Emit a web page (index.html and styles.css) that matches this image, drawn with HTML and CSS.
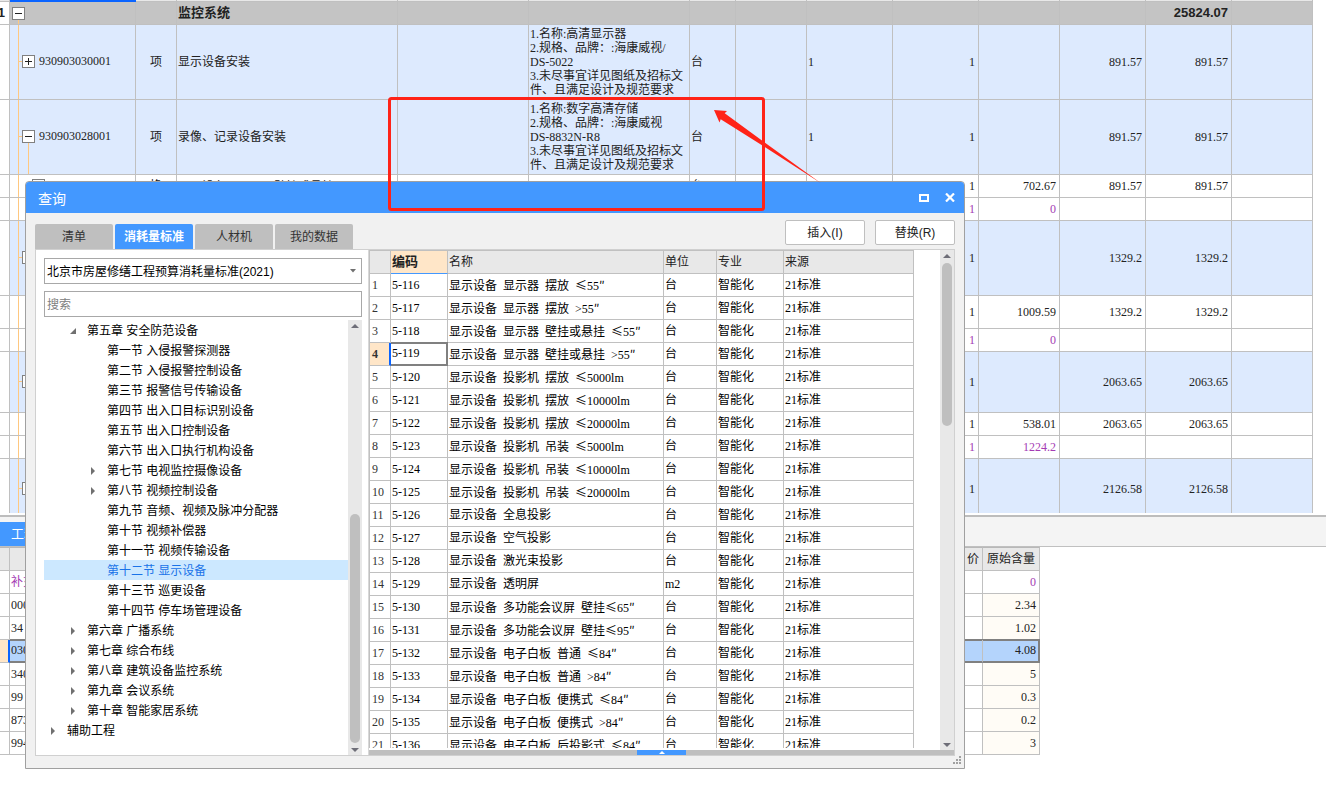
FILE: index.html
```html
<!DOCTYPE html>
<html lang="zh-CN">
<head>
<meta charset="utf-8">
<title>查询</title>
<link rel="stylesheet" href="styles.css">
</head>
<body>
<main class="workspace">
  <section class="sheet">
    <table class="grid bill">
      <colgroup>
        <col class="w10"><col class="w126"><col class="w41"><col class="w221"><col class="w131"><col class="w161"><col class="w46">
        <col class="w71"><col class="w86"><col class="w86"><col class="w81"><col class="w86"><col class="w86"><col class="w81">
      </colgroup>
      <tbody id="bill"></tbody>
    </table>
  </section>
  <section class="detail">
    <div class="detail-bar"><button class="detail-tab" type="button">工料机显示</button></div>
    <table class="grid usage">
      <colgroup><col class="w10"><col class="w90"><col class="w800"><col class="w83"><col class="w57"></colgroup>
      <thead><tr><th></th><th></th><th></th><th class="num">价</th><th>原始含量</th></tr></thead>
      <tbody id="usage"></tbody>
    </table>
  </section>
</main>

<section class="dialog" role="dialog" aria-labelledby="dlg-title">
  <header class="titlebar">
    <h1 id="dlg-title">查询</h1>
    <button type="button" aria-label="最大化"><svg width="10" height="8" viewBox="0 0 10 8"><rect x="1" y="1" width="8" height="6" fill="none" stroke="#fff" stroke-width="2"/></svg></button>
    <button type="button" aria-label="关闭"><svg width="10" height="9" viewBox="0 0 10 9"><path d="M1 0.5L9 8.5M9 0.5L1 8.5" stroke="#fff" stroke-width="2.2"/></svg></button>
  </header>
  <div class="toolbar">
    <nav class="tabs">
      <button type="button">清单</button>
      <button type="button" class="active">消耗量标准</button>
      <button type="button">人材机</button>
      <button type="button">我的数据</button>
    </nav>
    <div class="actions">
      <button type="button">插入(I)</button>
      <button type="button">替换(R)</button>
    </div>
  </div>
  <div class="panes">
    <aside class="side">
      <div class="field">
        <select aria-label="标准"><option>北京市房屋修缮工程预算消耗量标准(2021)</option></select>
        <svg class="caret" width="6" height="4" viewBox="0 0 6 4"><path d="M0 0h6L3 3.5z" fill="#707070"/></svg>
      </div>
      <input class="search" type="text" placeholder="搜索" aria-label="搜索">
      <div class="tree-wrap">
        <ul class="tree" id="tree"></ul>
        <div class="scroll">
          <svg width="8" height="4" viewBox="0 0 8 4"><path d="M4 0L8 4H0z" fill="#6e6e78"/></svg>
          <i class="thumb low"></i>
          <svg width="8" height="4" viewBox="0 0 8 4"><path d="M4 4L8 0H0z" fill="#6e6e78"/></svg>
        </div>
      </div>
    </aside>
    <div class="results">
      <div class="results-view">
        <div class="results-body">
          <table class="grid items">
            <colgroup><col class="w21"><col class="w57"><col class="w216"><col class="w53"><col class="w67"><col class="w130"></colgroup>
            <thead><tr><th></th><th class="sorted">编码</th><th>名称</th><th>单位</th><th>专业</th><th>来源</th></tr></thead>
            <tbody id="items"></tbody>
          </table>
        </div>
        <div class="scroll">
          <svg width="8" height="4" viewBox="0 0 8 4"><path d="M4 0L8 4H0z" fill="#6e6e78"/></svg>
          <i class="thumb high"></i>
          <svg width="8" height="4" viewBox="0 0 8 4"><path d="M4 4L8 0H0z" fill="#6e6e78"/></svg>
        </div>
      </div>
      <div class="splitter"><button type="button" aria-label="展开"><svg width="6" height="3" viewBox="0 0 6 3"><path d="M3 0L6 3H0z" fill="#fff"/></svg></button></div>
    </div>
  </div>
  <svg class="grip" width="8" height="8" viewBox="0 0 8 8" fill="#a0a0a0"><path d="M6 0h2v2H6zM3 3h2v2H3zM6 3h2v2H6zM0 6h2v2H0zM3 6h2v2H3zM6 6h2v2H6z"/></svg>
</section>

<svg class="markup" width="440" height="120" viewBox="0 0 440 120">
  <rect x="3.5" y="3.5" width="374" height="111" rx="2" fill="none" stroke="#ff2318" stroke-width="3"/>
  <path d="M328 15L341 16L338.700 18.200L378 47L435 88.300L378 51.500L334.700 24.200L333.500 27.500Z" fill="#ff2318"/>
</svg>
<script src="app.js"></script>
</body>
</html>
```

FILE: styles.css
```css
* { box-sizing: border-box; }

body {
  margin: 0;
  background: #fff;
  color: #222;
  font: 12px/14px "Liberation Sans", "Noto Sans CJK SC", sans-serif;
  overflow: hidden;
}

button, input, select { font: inherit; color: inherit; }
button { padding: 0; border: 0; background: none; }

/* grids */
.grid {
  table-layout: fixed;
  width: 1px;
  border-collapse: separate;
  border-spacing: 0;
  font-family: "Liberation Serif", "Noto Sans CJK SC", serif;
}
.grid td, .grid th {
  height: 23px;
  padding: 0 1px 1px;
  border: 0 solid #c0c0c0;
  border-width: 0 1px 1px 0;
  white-space: nowrap;
  text-align: left;
  font-weight: normal;
}
.grid th { background: #e8e8e8; }
.grid .num { text-align: right; padding-right: 3px; }
.grid .mid { text-align: center; }
.grid .rowno { padding: 0; background: #fff; }
.rowno span { display: flex; justify-content: flex-end; padding-right: 9px; }
.wide { font-family: "Noto Sans CJK SC", sans-serif; }

.w10 { width: 10px; }
.w21 { width: 21px; }
.w41 { width: 41px; }
.w46 { width: 46px; }
.w53 { width: 53px; }
.w57 { width: 57px; }
.w67 { width: 67px; }
.w71 { width: 71px; }
.w81 { width: 81px; }
.w83 { width: 83px; }
.w86 { width: 86px; }
.w90 { width: 90px; }
.w126 { width: 126px; }
.w130 { width: 130px; }
.w131 { width: 131px; }
.w161 { width: 161px; }
.w216 { width: 216px; }
.w221 { width: 221px; }
.w800 { width: 800px; }

/* bill of quantities */
.sheet { height: 513px; overflow: hidden; }
.bill .edge td { height: 2px; padding: 0; background: #e8e8e8; }
.bill .edge .current { background: #0a64ff; border-color: #0a64ff; }
.bill .total td { padding-bottom: 0; background: #c4c4c4; font: bold 13px/14px "Liberation Sans", "Noto Sans CJK SC", sans-serif; }
.bill .total .rowno { background: #fff; }
.bill .total .rowno span { padding-right: 4px; }
.bill .item td { background-color: #ddeafe; }
.bill .item .rowno { background: #fff; }
.bill .tall td { height: 75px; }
.bill .medium td { height: 61px; }
.bill .low td { height: 33px; }
.bill .material { color: #a43cb4; }
.bill .code { padding: 0 0 2px; background: linear-gradient(#ffc880, #ffc880) 8px 0 / 1px 100% no-repeat; }
.bill .expanded .code {
  background-image: linear-gradient(#ffc880, #ffc880), linear-gradient(#ffc880, #ffc880);
  background-position: 8px 0, 18px 100%;
  background-size: 1px 100%, 1px 50%;
}
.bill .total .code { background: #c4c4c4 linear-gradient(#ffc880, #ffc880) 8px 100% / 1px 50% no-repeat; }
.node { display: flex; align-items: center; gap: 4px; }
.node::before { content: ""; width: 3px; height: 1px; margin-left: 9px; background: #ffc880; }
.node .toggle { margin-left: -4px; }
.node.depth0::before { display: none; }
.node.depth0 .toggle { margin-left: 2px; }
.node.depth2::before { margin-left: 19px; }
.toggle { width: 13px; height: 13px; border: 1px solid #808080; background: #fff; }
.toggle svg { display: block; }

/* detail pane */
.detail { margin-top: 2px; border-top: 2px solid #bdbdbd; }
.detail-bar { display: flex; height: 30px; padding-top: 5px; border-bottom: 1px solid #c0c0c0; background: #f4f4f4; }
.detail-tab { width: 90px; height: 24px; padding-left: 11px; background: #4398ff; color: #fff; text-align: left; font-size: 13px; }
.usage th { height: 24px; border-top: 1px solid #b8b8b8; text-align: center; }
.usage .amount { background: #fffcf6; }
.usage .material td { color: #a43cb4; background: #fff; }
.usage .selected td { background: #b4d4fc; border-bottom: 2px solid #808080; box-shadow: inset 0 1px #808080, 0 -1px #808080; }
.usage .selected td:last-child { border-right-color: #808080; box-shadow: inset 0 1px #808080, 0 -1px #808080, inset -1px 0 #808080; }
.usage .selected .rowno { background: #ffe6c8; border-right: 2px solid #0a64ff; border-bottom: 1px solid #c0c0c0; box-shadow: none; }

/* query dialog */
.dialog {
  position: absolute;
  left: 25px;
  top: 181px;
  width: 940px;
  height: 588px;
  display: flex;
  flex-direction: column;
  border: 1px solid #a0a0a0;
  border-radius: 4px 4px 0 0;
  background: #f1f1f1;
}
.titlebar {
  display: flex;
  align-items: center;
  gap: 16px;
  height: 31px;
  padding: 0 9px 0 12px;
  border-radius: 3px 3px 0 0;
  background: #4398ff;
  color: #fff;
}
.titlebar h1 { flex: 1; margin: 0; padding-top: 2px; font-size: 14px; line-height: 18px; font-weight: normal; }
.titlebar svg { display: block; }
.toolbar { display: flex; justify-content: space-between; padding: 7px 9px 0; height: 36px; }
.tabs { display: flex; align-items: flex-end; gap: 2px; }
.tabs button { width: 78px; height: 25px; border-radius: 2px 2px 0 0; background: #bfbfbf; color: #333; }
.tabs .active { background: #4398ff; color: #fff; font-weight: bold; }
.actions { display: flex; gap: 10px; }
.actions button { width: 80px; height: 25px; border: 1px solid #bfbfbf; border-radius: 2px; background: #fff; }
.panes { display: flex; flex: 1; min-height: 0; margin: 0 9px 12px; border: 1px solid #d0d0d0; }

.side { display: flex; flex-direction: column; gap: 7px; width: 333px; padding: 8px 6px 0 8px; border-right: 1px solid #d8d8d8; background: #fff; }
.field { display: grid; }
.field select { grid-area: 1 / 1; height: 26px; padding: 2px 2px 0; border: 1px solid #a8a8a8; border-radius: 0; background: #fff; color: #000; appearance: none; }
.field .caret { grid-area: 1 / 1; place-self: center end; margin-right: 6px; }
.search { height: 26px; padding: 2px 2px 0; border: 1px solid #a8a8a8; background: #fff; }
.search::placeholder { color: #808080; }
.tree-wrap { display: flex; flex: 1; min-height: 0; margin-top: -4px; }
.tree { flex: 1; margin: 0; padding: 0; list-style: none; color: #000; }
.tree li { display: flex; align-items: center; height: 20px; padding: 2px 0 0 5px; white-space: nowrap; }
.tree .lv1 { padding-left: 25px; }
.tree .lv2 { padding-left: 45px; }
.tree svg, .tree .leaf { width: 8px; height: 8px; margin-right: 10px; }
.tree .selected { background: #cce8ff; color: #1a73e8; }
.scroll { display: flex; flex-direction: column; align-items: center; width: 14px; padding: 4px 0 3px; background: #e8e8e8; }
.thumb { width: 10px; border-radius: 5px; background: #bfbfbf; }
.thumb.low { height: 229px; margin: auto 0 5px; }
.thumb.high { height: 163px; margin: 5px 0 auto; }

.results { display: flex; flex-direction: column; flex: 1; min-width: 0; background: #fff; }
.results-view { display: flex; flex: 1; min-height: 0; }
.results-body { flex: 1; min-width: 0; margin-bottom: 2px; overflow: hidden; }
.items { border-left: 1px solid #c0c0c0; color: #000; }
.items th { border-top: 1px solid #c0c0c0; height: 24px; padding-bottom: 0; color: #222; }
.items .sorted { background: #ffe6c8; border-bottom-color: #4398ff; font-weight: bold; font-size: 13px; }
.items .rowno { padding: 0 2px; color: #333; }
.items .selected .rowno { background: #ffe6c8; font-weight: bold; border-right: 2px solid #0a64ff; }
.items .selected .key { border: 0 solid #808080; border-width: 0 2px 2px 0; box-shadow: inset 0 1px #808080, 0 -1px #808080; }
.parts { display: flex; align-items: baseline; gap: 6px; height: 14px; }
.splitter { display: flex; height: 5px; padding-left: 268px; background: #bfbfbf; }
.splitter button { display: flex; justify-content: center; align-items: center; width: 49px; background: #4398ff; }
.grip { position: absolute; right: 3px; bottom: 4px; }

.markup { position: absolute; left: 386px; top: 95px; pointer-events: none; }
```

FILE: app.js
```js
const wide = s => s.replace(/>/g, "&gt;").replace(/[≤″]/g, c => `<span class="wide">${c}</span>`);
const parts = s => `<div class="parts">${s.split(" ").map(p => `<span>${wide(p)}</span>`).join("")}</div>`;
const minus = "M2 5.5h7", plus = "M2 5.5h7M5.500 2v7";

function node(depth, sign, code) {
  const icon = `<span class="toggle"><svg width="11" height="11" viewBox="0 0 11 11"><path d="${sign === "+" ? plus : minus}" stroke="#222"/></svg></span>`;
  return `<div class="node depth${depth}">${icon}${code}</div>`;
}

const desc = (name, brand, model) => `1.名称:${name}<br>2.规格、品牌：:${brand}<br>${model}<br>3.未尽事宜详见图纸及招标文<br>件、且满足设计及规范要求`;

// class, row number, tree cell, type, name, description, unit, quantity, factor, price, rate, amount
const bill = [
  ["total", "1", node(0, "-", ""), "", "监控系统", "", "", "", "", "", "", "25824.07"],
  ["item tall", "", node(1, "+", "930903030001"), "项", "显示设备安装", desc("高清显示器", "海康威视/", "DS-5022"), "台", "1", "1", "", "891.57", "891.57"],
  ["item tall expanded", "2", node(1, "-", "930903028001"), "项", "录像、记录设备安装", desc("数字高清存储", "海康威视", "DS-8832N-R8"), "台", "1", "1", "", "891.57", "891.57"],
  ["", "", node(2, "-", ""), "换", parts("显示设备 显示器 壁挂或悬挂 >55″"), "", "台", "", "1", "702.67", "891.57", "891.57"],
  ["material", "", "", "", "", "", "", "", "1", "0", "", ""],
  ["item tall", "3", node(1, "-", ""), "", "", "", "", "", "1", "", "1329.2", "1329.2"],
  ["low", "", "", "", "", "", "", "", "1", "1009.59", "1329.2", "1329.2"],
  ["material", "", "", "", "", "", "", "", "1", "0", "", ""],
  ["item medium", "4", node(1, "-", ""), "", "", "", "", "", "1", "", "2063.65", "2063.65"],
  ["", "", "", "", "", "", "", "", "1", "538.01", "2063.65", "2063.65"],
  ["material", "", "", "", "", "", "", "", "1", "1224.2", "", ""],
  ["item medium", "5", node(1, "-", ""), "", "", "", "", "", "1", "", "2126.58", "2126.58"]
];
document.getElementById("bill").innerHTML =
  `<tr class="edge"><td></td><td class="current"></td>${"<td></td>".repeat(12)}</tr>` +
  bill.map(r => `<tr class="${r[0]}"><td class="rowno"><span>${r[1]}</span></td><td class="code">${r[2]}</td><td class="mid">${r[3]}</td><td>${r[4]}</td><td></td><td>${r[5]}</td><td>${r[6]}</td><td></td><td>${r[7]}</td>${r.slice(8).map(v => `<td class="num">${v}</td>`).join("")}<td></td></tr>`).join("");

const usage = [["补充", "0"], ["0001", "2.34"], ["34", "1.02"], ["0301", "4.08"], ["3401", "5"], ["99", "0.3"], ["8730", "0.2"], ["9940", "3"]];
document.getElementById("usage").innerHTML = usage.map(([code, n], i) =>
  `<tr class="${i === 0 ? "material" : i === 3 ? "selected" : ""}"><td class="rowno"><span>${i ? i + 1 : ""}</span></td><td>${code}</td><td></td><td></td><td class="num amount">${n}</td></tr>`).join("");

const tree = [
  [1, "open", "第五章 安全防范设备"],
  [2, "", "第一节 入侵报警探测器"],
  [2, "", "第二节 入侵报警控制设备"],
  [2, "", "第三节 报警信号传输设备"],
  [2, "", "第四节 出入口目标识别设备"],
  [2, "", "第五节 出入口控制设备"],
  [2, "", "第六节 出入口执行机构设备"],
  [2, "shut", "第七节 电视监控摄像设备"],
  [2, "shut", "第八节 视频控制设备"],
  [2, "", "第九节 音频、视频及脉冲分配器"],
  [2, "", "第十节 视频补偿器"],
  [2, "", "第十一节 视频传输设备"],
  [2, "", "第十二节 显示设备"],
  [2, "", "第十三节 巡更设备"],
  [2, "", "第十四节 停车场管理设备"],
  [1, "shut", "第六章 广播系统"],
  [1, "shut", "第七章 综合布线"],
  [1, "shut", "第八章 建筑设备监控系统"],
  [1, "shut", "第九章 会议系统"],
  [1, "shut", "第十章 智能家居系统"],
  [0, "shut", "辅助工程"]
];
const arrows = { open: "M7 1v6H1z", shut: "M2 0l4 4-4 4z" };
document.getElementById("tree").innerHTML = tree.map(([lv, state, text]) =>
  `<li class="lv${lv}${text.includes("十二") ? " selected" : ""}">${state ? `<svg viewBox="0 0 8 8"><path d="${arrows[state]}" fill="#707070"/></svg>` : '<span class="leaf"></span>'}${text}</li>`).join("");

const names = [
  "显示器 摆放 ≤55″", "显示器 摆放 >55″", "显示器 壁挂或悬挂 ≤55″", "显示器 壁挂或悬挂 >55″",
  "投影机 摆放 ≤5000lm", "投影机 摆放 ≤10000lm", "投影机 摆放 ≤20000lm",
  "投影机 吊装 ≤5000lm", "投影机 吊装 ≤10000lm", "投影机 吊装 ≤20000lm",
  "全息投影", "空气投影", "激光束投影", "透明屏",
  "多功能会议屏 壁挂≤65″", "多功能会议屏 壁挂≤95″",
  "电子白板 普通 ≤84″", "电子白板 普通 >84″", "电子白板 便携式 ≤84″", "电子白板 便携式 >84″", "电子白板 后投影式 ≤84″"
];
document.getElementById("items").innerHTML = names.map((n, i) =>
  `<tr class="${i === 3 ? "selected" : ""}"><td class="rowno">${i + 1}</td><td class="key">5-${116 + i}</td><td>${parts("显示设备 " + n)}</td><td>${i === 13 ? "m2" : "台"}</td><td>智能化</td><td>21标准</td></tr>`).join("");
```
